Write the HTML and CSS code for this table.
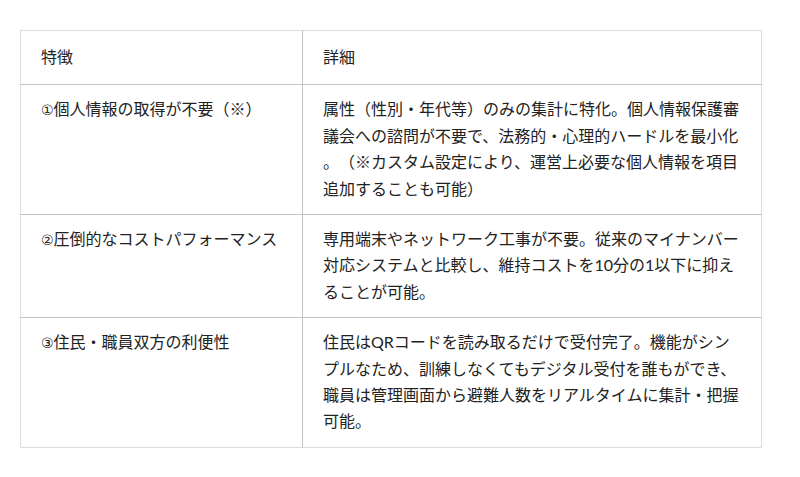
FILE: index.html
```html
<!DOCTYPE html>
<html lang="ja">
<head>
<meta charset="utf-8">
<link rel="stylesheet" href="styles.css">
</head>
<body>
<div class="wrap">
<table class="features">
<colgroup><col class="col-feature"><col class="col-detail"></colgroup>
<thead>
<tr><th>特徴</th><th>詳細</th></tr>
</thead>
<tbody>
<tr><td class="name"><span class="num">①</span>個人情報の取得が不要（※）</td><td>属性（性別・年代等）のみの集計に特化。個人情報保護審議会への諮問が不要で、法務的・心理的ハードルを最小化。（※カスタム設定により、運営上必要な個人情報を項目追加することも可能）</td></tr>
<tr><td class="name"><span class="num">②</span>圧倒的なコストパフォーマンス</td><td>専用端末やネットワーク工事が不要。従来のマイナンバー対応システムと比較し、維持コストを10分の1以下に抑えることが可能。</td></tr>
<tr><td class="name"><span class="num">③</span>住民・職員双方の利便性</td><td>住民はQRコードを読み取るだけで受付完了。機能がシンプルなため、訓練しなくてもデジタル受付を誰もができ、職員は管理画面から避難人数をリアルタイムに集計・把握可能。</td></tr>
</tbody>
</table>
</div>
</body>
</html>
```
FILE: styles.css
```css
html, body {
  margin: 0;
  padding: 0;
  background: #ffffff;
}
.wrap {
  padding: 30px 0 0 20px;
}
.features {
  width: 742px;
  table-layout: fixed;
  border-collapse: collapse;
  border: 1px solid #dcdcdc;
  font-family: "Lato", "Noto Sans CJK JP", sans-serif;
  font-size: 16px;
  line-height: 26.4px;
  color: #222222;
  line-break: anywhere;
  text-spacing-trim: space-all;
}
.col-feature { width: 282px; }
.features th {
  font-weight: normal;
  text-align: left;
  padding: 13px 20px 14px;
  border: 1px solid #dcdcdc;
  border-bottom-color: #c4c4c4;
}
.features td {
  vertical-align: top;
  padding: 11px 20px 12px;
  border: 1px solid #dcdcdc;
  border-bottom-color: #c4c4c4;
}
.features td.name {
  padding-right: 8px;
}
.num {
  font-family: "DejaVu Sans", "Noto Sans CJK JP", sans-serif;
  font-size: 14px;
}
.features td:first-child,
.features th:first-child {
  border-right-color: #c4c4c4;
}
.features tbody tr:last-child td {
  border-bottom-color: #dcdcdc;
}
```
